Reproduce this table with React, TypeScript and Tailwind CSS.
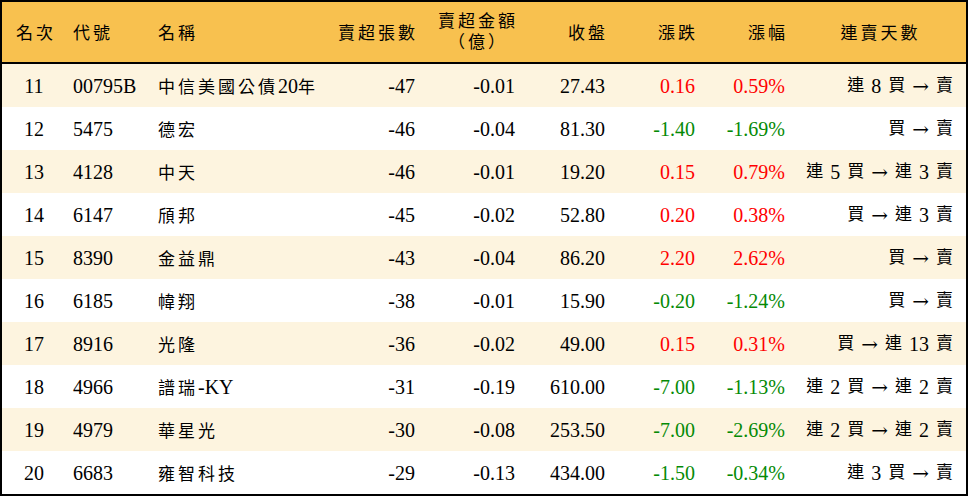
import React from "react";

type Row = {
  rank: number;
  code: string;
  name: string;
  net: string;
  amount: string;
  close: string;
  change: string;
  pct: string;
  streak: string;
};

const rows: Row[] = [
  { rank: 11, code: "00795B", name: "中信美國公債20年", net: "-47", amount: "-0.01", close: "27.43", change: "0.16", pct: "0.59%", streak: "連 8 買 → 賣" },
  { rank: 12, code: "5475", name: "德宏", net: "-46", amount: "-0.04", close: "81.30", change: "-1.40", pct: "-1.69%", streak: "買 → 賣" },
  { rank: 13, code: "4128", name: "中天", net: "-46", amount: "-0.01", close: "19.20", change: "0.15", pct: "0.79%", streak: "連 5 買 → 連 3 賣" },
  { rank: 14, code: "6147", name: "頎邦", net: "-45", amount: "-0.02", close: "52.80", change: "0.20", pct: "0.38%", streak: "買 → 連 3 賣" },
  { rank: 15, code: "8390", name: "金益鼎", net: "-43", amount: "-0.04", close: "86.20", change: "2.20", pct: "2.62%", streak: "買 → 賣" },
  { rank: 16, code: "6185", name: "幃翔", net: "-38", amount: "-0.01", close: "15.90", change: "-0.20", pct: "-1.24%", streak: "買 → 賣" },
  { rank: 17, code: "8916", name: "光隆", net: "-36", amount: "-0.02", close: "49.00", change: "0.15", pct: "0.31%", streak: "買 → 連 13 賣" },
  { rank: 18, code: "4966", name: "譜瑞-KY", net: "-31", amount: "-0.19", close: "610.00", change: "-7.00", pct: "-1.13%", streak: "連 2 買 → 連 2 賣" },
  { rank: 19, code: "4979", name: "華星光", net: "-30", amount: "-0.08", close: "253.50", change: "-7.00", pct: "-2.69%", streak: "連 2 買 → 連 2 賣" },
  { rank: 20, code: "6683", name: "雍智科技", net: "-29", amount: "-0.13", close: "434.00", change: "-1.50", pct: "-0.34%", streak: "連 3 買 → 賣" },
];

const CJK_RE = /[\u3000-\u9fff\uff00-\uffef]/;

// 漢字だけ少し小さく・字間を空ける（明朝体の見た目に寄せる）
const Cjk: React.FC<{ text: string }> = ({ text }) => (
  <>
    {text.split(/([\u3000-\u9fff\uff00-\uffef]+)/).map((part, i) =>
      CJK_RE.test(part) ? (
        <span key={i} className="text-[17px] tracking-[3px]">{part}</span>
      ) : (
        <span key={i}>{part}</span>
      )
    )}
  </>
);

// 連賣天數：トークンごとに等間隔で並べる
const Streak: React.FC<{ text: string }> = ({ text }) => (
  <div className="flex justify-end items-center gap-[7px] whitespace-nowrap">
    {text.split(" ").map((t, i) =>
      t === "→" ? (
        <span key={i} className="text-[20px]" style={{ fontFamily: '"DejaVu Serif", serif' }}>→</span>
      ) : CJK_RE.test(t) ? (
        <span key={i} className="text-[17px]">{t}</span>
      ) : (
        <span key={i}>{t}</span>
      )
    )}
  </div>
);

const cols = "grid grid-cols-[64px_84px_180px_95px_100px_90px_90px_90px_171px]";

export default function App() {
  return (
    <div
      className="w-[968px] h-[496px] bg-white border-2 border-black text-black text-[20px] leading-none"
      style={{ fontFamily: '"Liberation Serif", "Noto Sans CJK TC", serif' }}
    >
      {/* ヘッダー */}
      <div className={`${cols} h-[62px] bg-[#f8c14f] border-b-2 border-black items-center`}>
        <div className="text-center pl-1"><Cjk text="名次" /></div>
        <div className="pl-[7px]"><Cjk text="代號" /></div>
        <div className="pl-[8px]"><Cjk text="名稱" /></div>
        <div className="text-right pr-[7px]"><Cjk text="賣超張數" /></div>
        <div className="flex justify-end pr-[7px]">
          <div className="flex flex-col items-center leading-[21px]">
            <Cjk text="賣超金額" />
            <Cjk text="（億）" />
          </div>
        </div>
        <div className="text-right pr-[7px]"><Cjk text="收盤" /></div>
        <div className="text-right pr-[7px]"><Cjk text="漲跌" /></div>
        <div className="text-right pr-[7px]"><Cjk text="漲幅" /></div>
        <div className="text-center"><Cjk text="連賣天數" /></div>
      </div>

      {/* データ行 */}
      {rows.map((r, i) => {
        const up = !r.change.startsWith("-");
        const color = up ? "text-[#ff0000]" : "text-[#058a05]";
        return (
          <div key={r.rank} className={`${cols} h-[43px] items-center ${i % 2 === 0 ? "bg-[#fdf4df]" : "bg-white"}`}>
            <div className="text-center">{r.rank}</div>
            <div className="pl-[7px]">{r.code}</div>
            <div className="pl-[8px] whitespace-nowrap"><Cjk text={r.name} /></div>
            <div className="text-right pr-[10px]">{r.net}</div>
            <div className="text-right pr-[10px]">{r.amount}</div>
            <div className="text-right pr-[10px]">{r.close}</div>
            <div className={`text-right pr-[10px] ${color}`}>{r.change}</div>
            <div className={`text-right pr-[10px] ${color}`}>{r.pct}</div>
            <div className="pr-[13px]"><Streak text={r.streak} /></div>
          </div>
        );
      })}
    </div>
  );
}
